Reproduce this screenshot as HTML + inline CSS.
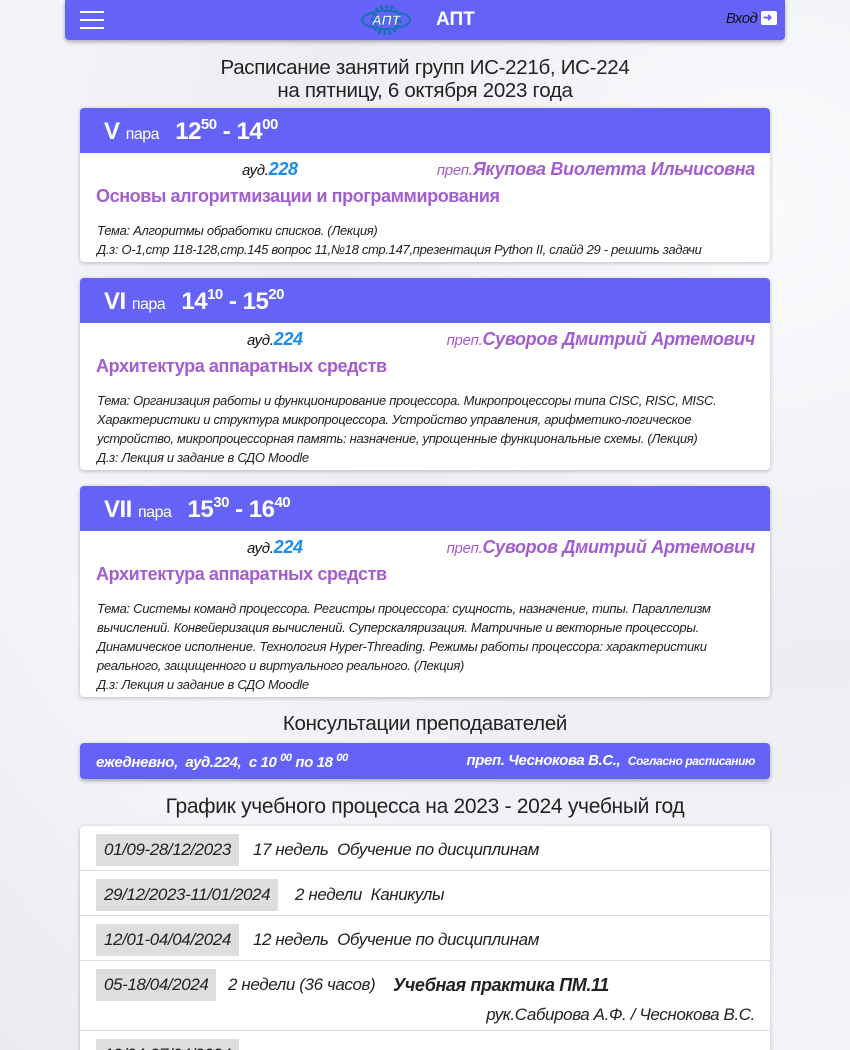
<!DOCTYPE html>
<html><head><meta charset="utf-8">
<style>
*{box-sizing:border-box;margin:0;padding:0}
html,body{width:850px;height:1050px;overflow:hidden}
body{background:#eef0f4;font-family:"Liberation Sans",sans-serif;color:#222;position:relative}
.bg{position:absolute;inset:0;background:radial-gradient(circle at 90% 20%,#fafbfd 0,#eceef2 40%,#f4f5f8 70%,#e9ebef 100%)}
.nav{position:absolute;left:65px;top:0;width:720px;height:40px;background:#6563f7;border-radius:0 0 4px 4px;box-shadow:0 2px 4px rgba(0,0,0,.3)}
.burger{position:absolute;left:15px;top:11px;width:24px;height:18px}
.burger i{display:block;height:2px;background:#fff;margin-bottom:6px}
.logo{position:absolute;left:290px;top:5px}
.brand{position:absolute;left:371px;top:9px;color:#fff;font-weight:bold;font-size:19px}
.login{position:absolute;right:8px;top:10px;font-style:italic;font-size:15px;color:#111;letter-spacing:-.5px}
.h{position:absolute;left:0;width:850px;text-align:center;font-size:20.5px;color:#222;letter-spacing:-.3px}
.card{position:absolute;left:80px;width:690px;background:#fff;border-radius:4px;box-shadow:0 1px 4px rgba(0,0,0,.25);overflow:hidden}
.ch{height:45px;background:#6563f7;color:#fff;padding-left:24px;font-weight:bold;font-size:24px;line-height:47px;letter-spacing:-.5px}
.ch small{font-size:16px;font-weight:normal;margin-right:10px}
.ch sup{font-size:15px;vertical-align:10px;line-height:0}
.row1{position:relative;height:32px;font-style:italic}
.aud{position:absolute;top:6px;font-size:15px;color:#111;letter-spacing:-.3px}
.aud b{color:#1a8cf0;font-size:18px;font-weight:bold}
.prep{position:absolute;right:15px;top:6px;font-size:15px;color:#a45dd0;letter-spacing:-.3px}
.prep b{font-size:18px}
.subj{padding-left:16px;color:#a45dd0;font-size:18px;font-weight:bold;letter-spacing:-.4px;height:36px;line-height:22px}
.tema{padding-left:17px;font-style:italic;font-size:13px;line-height:19px;letter-spacing:-.3px;white-space:nowrap;color:#222}
.cons{position:absolute;left:80px;top:743px;width:690px;height:36px;background:#6563f7;border-radius:4px;box-shadow:0 2px 4px rgba(0,0,0,.3);color:#fff;font-style:italic;font-weight:bold;font-size:15px;letter-spacing:-.4px}
.cons sup{font-size:11px}
.tbl{position:absolute;left:80px;top:826px;width:690px;height:240px;background:#fff;border-radius:4px;box-shadow:0 1px 4px rgba(0,0,0,.25)}
.tr{position:relative;border-bottom:1px solid #ddd;height:45px}
.d{position:absolute;left:16px;top:8px;height:32px;background:#dedede;padding:0 8px;line-height:32px;font-style:italic;font-size:17px;color:#222;letter-spacing:-.4px}
.t{position:absolute;top:8px;line-height:32px;font-style:italic;font-size:17px;letter-spacing:-.4px;white-space:nowrap}
</style></head><body>
<div class="bg"></div>
<div class="nav">
 <div class="burger"><i></i><i></i><i></i></div>
 <svg class="logo" width="62" height="30" viewBox="0 0 62 30"><circle cx="31" cy="15" r="13" fill="none" stroke="#1d6fb8" stroke-width="5" stroke-dasharray="3 2"/><ellipse cx="31" cy="15" rx="24" ry="9" fill="none" stroke="#1d6fb8" stroke-width="2"/><text x="31" y="20" text-anchor="middle" font-family="Liberation Sans" font-style="italic" font-weight="bold" font-size="14" fill="#fff" stroke="#1d6fb8" stroke-width=".6">АПТ</text></svg>
 <div class="brand">АПТ</div>
 <div class="login">Вход <span style="display:inline-block;width:16px;height:14px;background:#fff;vertical-align:-2px;border-radius:2px;position:relative"><span style="position:absolute;left:2px;top:3px;color:#6563f7;font-style:normal;font-size:11px;font-weight:bold;line-height:8px">➜</span></span></div>
</div>
<div class="h" style="top:56px;line-height:23px">Расписание занятий групп ИС-221б, ИС-224<br>на пятницу, 6 октября 2023 года</div>

<div class="card" style="top:108px;height:154px">
 <div class="ch">V <small>пара</small> 12<sup>50</sup> - 14<sup>00</sup></div>
 <div class="row1"><span class="aud" style="left:162px">ауд.<b>228</b></span><span class="prep">преп.<b>Якупова Виолетта Ильчисовна</b></span></div>
 <div class="subj">Основы алгоритмизации и программирования</div>
 <div class="tema">Тема: Алгоритмы обработки списков. (Лекция)<br>Д.з: О-1,стр 118-128,стр.145 вопрос 11,№18 стр.147,презентация Python II, слайд 29 - решить задачи</div>
</div>

<div class="card" style="top:278px;height:192px">
 <div class="ch">VI <small>пара</small> 14<sup>10</sup> - 15<sup>20</sup></div>
 <div class="row1"><span class="aud" style="left:167px">ауд.<b>224</b></span><span class="prep">преп.<b>Суворов Дмитрий Артемович</b></span></div>
 <div class="subj">Архитектура аппаратных средств</div>
 <div class="tema">Тема: Организация работы и функционирование процессора. Микропроцессоры типа CISC, RISC, MISC.<br>Характеристики и структура микропроцессора. Устройство управления, арифметико-логическое<br>устройство, микропроцессорная память: назначение, упрощенные функциональные схемы. (Лекция)<br>Д.з: Лекция и задание в СДО Moodle</div>
</div>

<div class="card" style="top:486px;height:211px">
 <div class="ch">VII <small>пара</small> 15<sup>30</sup> - 16<sup>40</sup></div>
 <div class="row1"><span class="aud" style="left:167px">ауд.<b>224</b></span><span class="prep">преп.<b>Суворов Дмитрий Артемович</b></span></div>
 <div class="subj">Архитектура аппаратных средств</div>
 <div class="tema">Тема: Системы команд процессора. Регистры процессора: сущность, назначение, типы. Параллелизм<br>вычислений. Конвейеризация вычислений. Суперскаляризация. Матричные и векторные процессоры.<br>Динамическое исполнение. Технология Hyper-Threading. Режимы работы процессора: характеристики<br>реального, защищенного и виртуального реального. (Лекция)<br>Д.з: Лекция и задание в СДО Moodle</div>
</div>

<div class="h" style="top:712px">Консультации преподавателей</div>
<div class="cons">
 <span style="position:absolute;left:16px;top:9px">ежедневно,&nbsp; ауд.224,&nbsp; с 10 <sup>00</sup> по 18 <sup>00</sup></span>
 <span style="position:absolute;right:15px;top:9px">преп. Чеснокова В.С., &nbsp;<span style="font-size:12px">Согласно расписанию</span></span>
</div>

<div class="h" style="top:795px;font-size:21px">График учебного процесса на 2023 - 2024 учебный год</div>
<div class="tbl">
 <div class="tr"><span class="d">01/09-28/12/2023</span><span class="t" style="left:173px">17 недель&nbsp; Обучение по дисциплинам</span></div>
 <div class="tr"><span class="d">29/12/2023-11/01/2024</span><span class="t" style="left:215px">2 недели&nbsp; Каникулы</span></div>
 <div class="tr"><span class="d">12/01-04/04/2024</span><span class="t" style="left:173px">12 недель&nbsp; Обучение по дисциплинам</span></div>
 <div class="tr" style="height:70px"><span class="d">05-18/04/2024</span><span class="t" style="left:148px">2 недели (36 часов)</span><span class="t" style="left:313px;font-weight:bold;font-size:18px">Учебная практика ПМ.11</span><span class="t" style="right:15px;top:38px">рук.Сабирова А.Ф. / Чеснокова В.С.</span></div>
 <div class="tr" style="border:0"><span class="d">19/04-27/04/2024</span></div>
</div>
</body></html>
